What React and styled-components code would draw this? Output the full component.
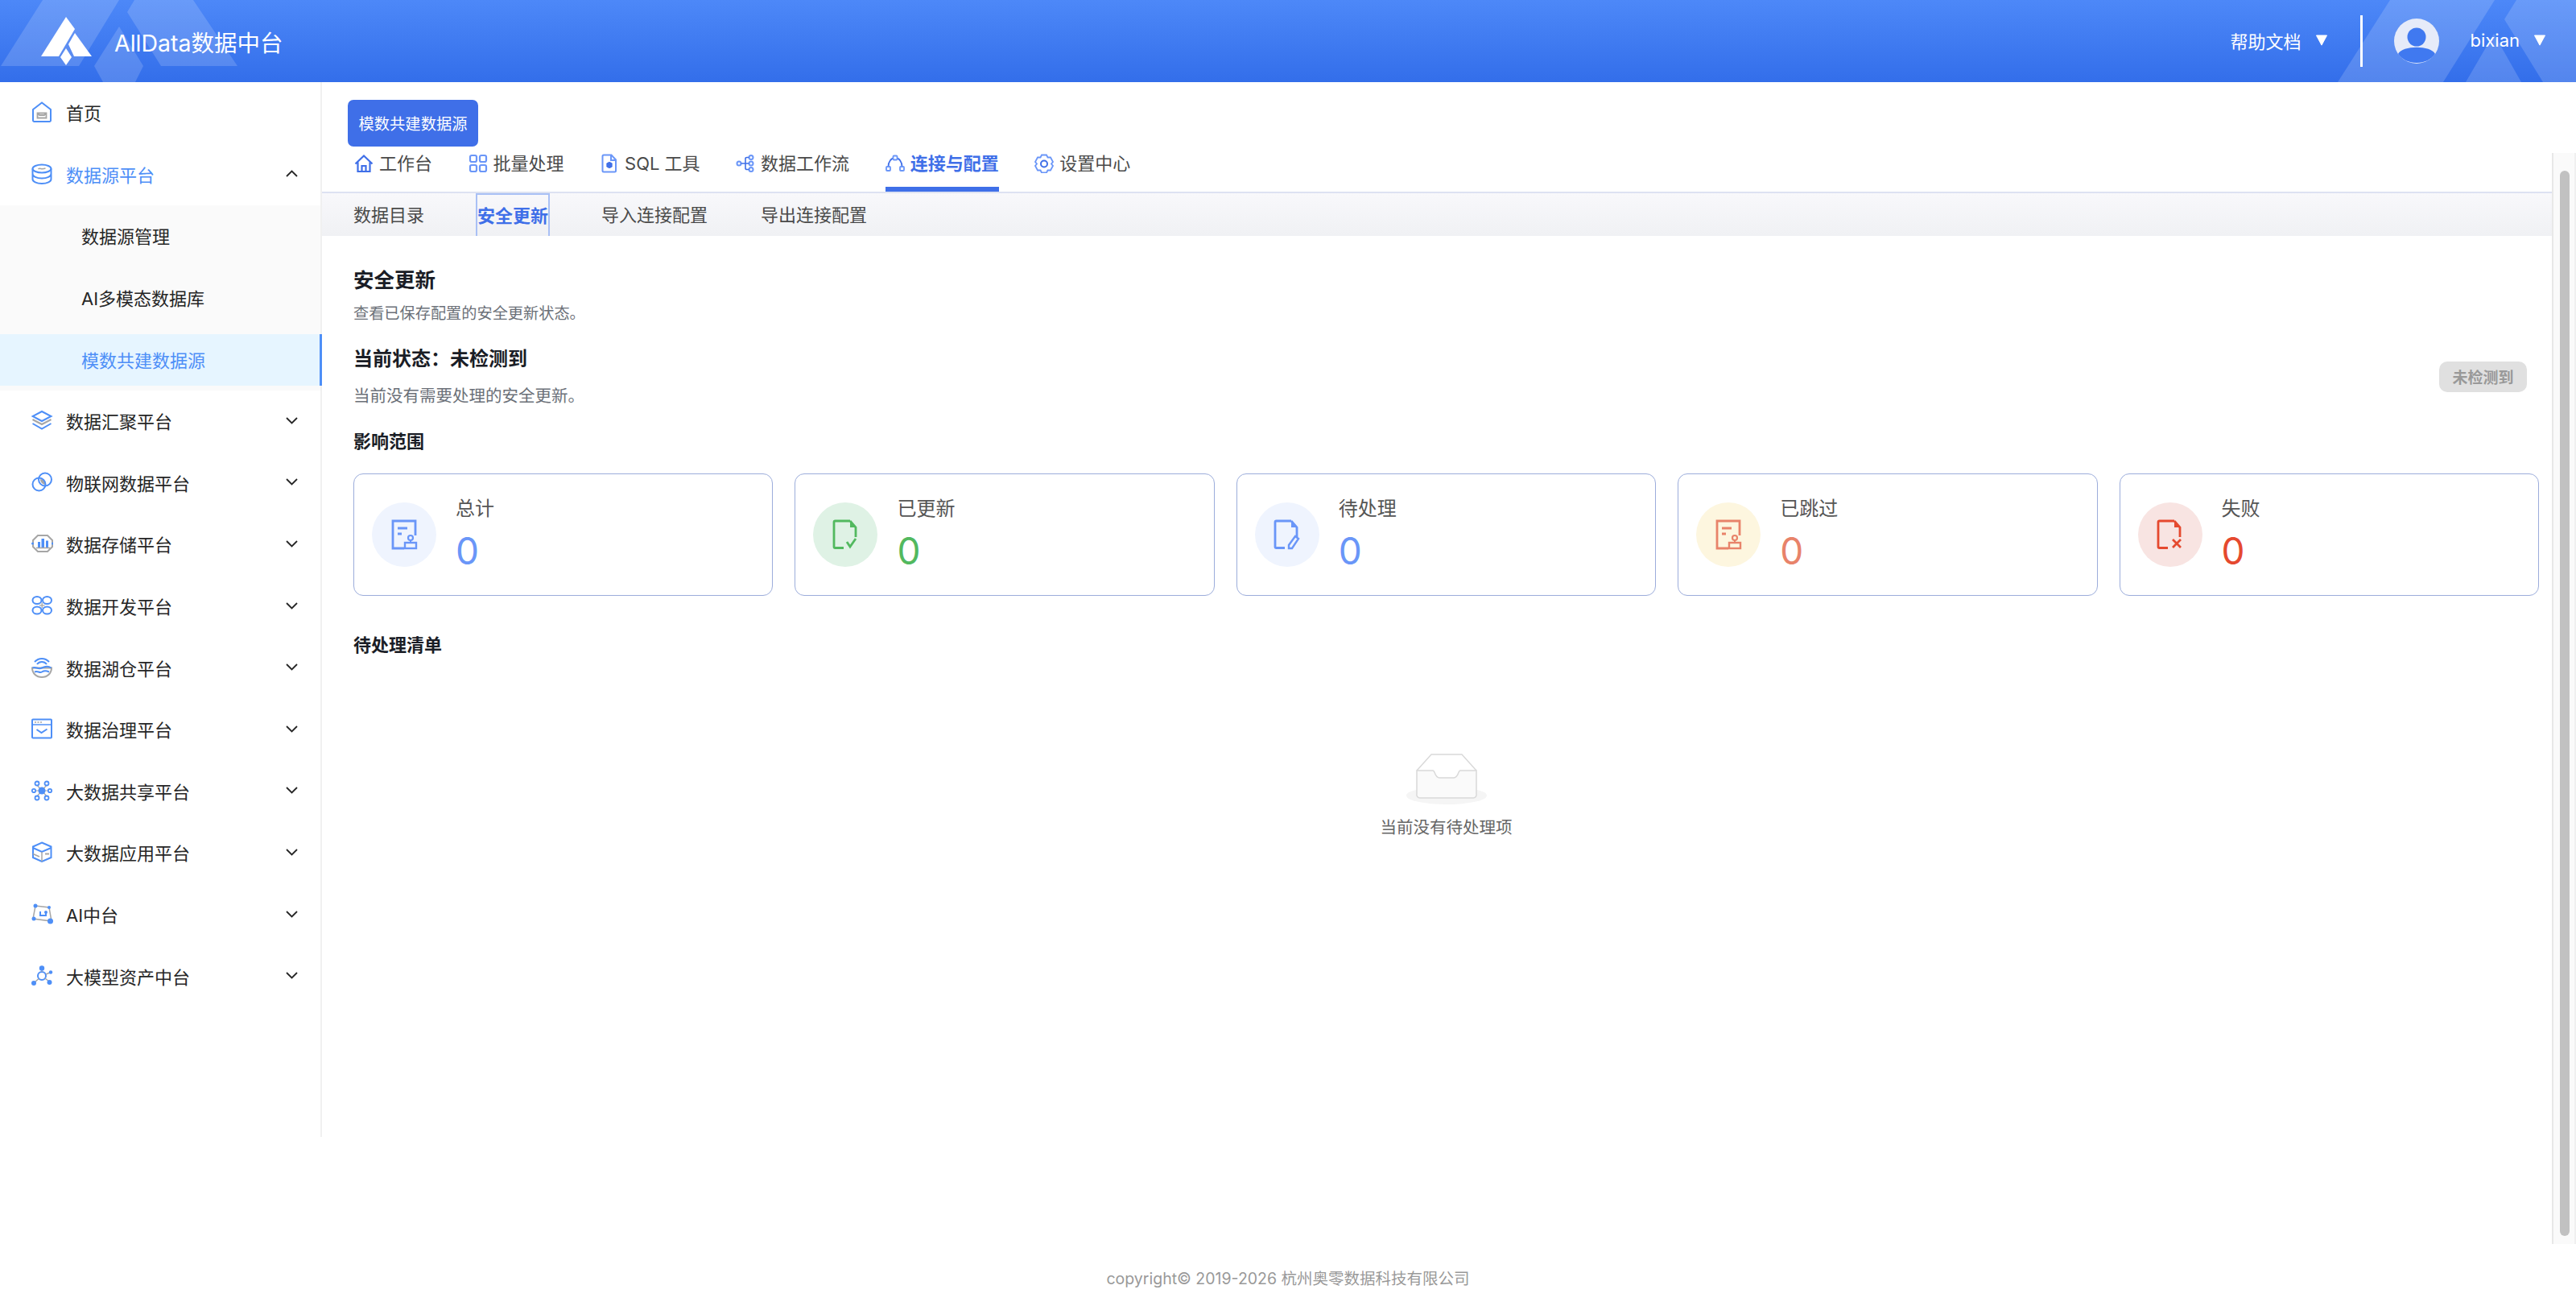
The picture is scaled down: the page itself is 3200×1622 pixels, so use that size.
import React from "react";
import styled, { createGlobalStyle } from "styled-components";

const GlobalStyle = createGlobalStyle`
	html, body {
		margin: 0;
		padding: 0;
		background: #fff;
		overflow: hidden;
	}
	body {
		font-family: Inter, "Noto Sans CJK SC", sans-serif;
		color: #262626;
	}
	* {
		box-sizing: border-box;
	}
`;

const Page = styled.div`
	width: 3200px;
	height: 1622px;
	display: flex;
	flex-direction: column;
`;

const Header = styled.header`
	position: relative;
	height: 102px;
	flex: none;
	display: flex;
	align-items: center;
	padding: 0 37px 0 50px;
	background: linear-gradient(180deg, #4d88f8 0%, #336eea 100%);
	color: #fff;
	overflow: hidden;
`;

const HeaderArt = styled.svg`
	position: absolute;
	top: 0;
	left: 0;
	pointer-events: none;
`;

const Brand = styled.div`
	position: relative;
	display: flex;
	align-items: center;
	gap: 26px;
	font-size: 28.5px;
`;

const HeaderRight = styled.div`
	position: relative;
	margin-left: auto;
	display: flex;
	align-items: center;
	font-size: 22px;
`;

const HeaderLabel = styled.span`
	padding-bottom: 3px;
`;

const HeaderDivider = styled.span`
	width: 3px;
	height: 64px;
	background: #fff;
	margin: 0 39px 0 40px;
`;

const Avatar = styled.svg`
	margin-right: 39px;
`;

const Caret = styled.svg`
	margin-left: 17px;
	padding-bottom: 1px;
`;

const Body = styled.div`
	flex: 1;
	display: flex;
	min-height: 0;
`;

const Sidebar = styled.nav`
	width: 400px;
	height: 1310px;
	flex: none;
	border-right: 2px solid #f0f0f0;
	background: #fff;
`;

const MenuRow = styled.div`
	height: 76.6px;
	display: flex;
	align-items: center;
	padding: 0 28px 2px 39px;
	font-size: 22px;
	color: ${(p) => (p.$open ? "#4e8ff7" : "#262626")};
`;

const MenuIcon = styled.svg`
	flex: none;
	margin-right: 16px;
`;

const Chevron = styled.svg`
	margin-left: auto;
`;

const SubMenu = styled.div`
	display: flex;
	flex-direction: column;
	gap: 12.6px;
	padding: 6.3px 0;
	background: #fafafa;
`;

const SubRow = styled.div`
	height: 64px;
	display: flex;
	align-items: center;
	padding: 0 0 2px 101px;
	font-size: 22px;
	color: ${(p) => (p.$active ? "#4e8ff7" : "#262626")};
	background: ${(p) => (p.$active ? "#e6f5ff" : "transparent")};
	border-right: ${(p) => (p.$active ? "3px solid #4e8ff7" : "none")};
	margin-right: ${(p) => (p.$active ? "-2px" : "0")};
`;

const Main = styled.main`
	flex: 1;
	min-width: 0;
	display: flex;
	flex-direction: column;
`;

const TitleButton = styled.div`
	width: 162px;
	height: 58px;
	margin: 22px 0 8px 32px;
	flex: none;
	display: flex;
	align-items: center;
	justify-content: center;
	border-radius: 7px;
	background: #3f6fe8;
	color: #fff;
	font-size: 19.3px;
`;

const ScrollArea = styled.div`
	flex: 1;
	display: flex;
	min-height: 0;
`;

const ScrollContent = styled.div`
	flex: 1;
	min-width: 0;
`;

const ScrollTrack = styled.div`
	width: 30px;
	flex: none;
	padding: 22px 6px 10px 8px;
	background: #fafafa;
	border-left: 2px solid #e8e8e8;
	border-right: 2px solid #f0f0f0;
`;

const ScrollThumb = styled.div`
	height: 100%;
	border-radius: 8px;
	background: #c1c1c1;
`;

const Tabs = styled.div`
	height: 48px;
	display: flex;
	gap: 44.5px;
	padding-left: 40px;
`;

const Tab = styled.div`
	display: flex;
	align-items: center;
	gap: 7px;
	height: 48px;
	padding-bottom: 20px;
	font-size: 22px;
	font-weight: ${(p) => (p.$active ? 600 : 400)};
	color: ${(p) => (p.$active ? "#3f6fe8" : "#4a4a4a")};
	border-bottom: 6px solid ${(p) => (p.$active ? "#3f6fe8" : "transparent")};
`;

const TabIcon = styled.svg`
	margin-top: 4px;
`;

const SubTabs = styled.div`
	height: 55px;
	display: flex;
	gap: 66px;
	padding-left: 39px;
	border-top: 2px solid #dde2f2;
	background: linear-gradient(180deg, #f8f8fb 0%, #f0f1f4 100%);
`;

const SubTab = styled.div`
	display: flex;
	align-items: center;
	padding-bottom: 3px;
	font-size: 22px;
	color: ${(p) => (p.$active ? "#3f6fe8" : "#4a4a4a")};
	font-weight: ${(p) => (p.$active ? 600 : 400)};
	border: ${(p) => (p.$active ? "2px solid #a9c0f5" : "none")};
	border-bottom: none;
	margin: ${(p) => (p.$active ? "0 -2px" : "0")};
`;

const Panel = styled.section`
	padding: 37px 16px 0 39px;
`;

const PageTitle = styled.h2`
	margin: 0;
	font-size: 25.5px;
	line-height: 36px;
	font-weight: 600;
	color: #1a1d26;
`;

const Muted = styled.p`
	margin: ${(p) => p.$top}px 0 0;
	font-size: ${(p) => p.$size}px;
	line-height: 28px;
	color: #6b7078;
`;

const StatusRow = styled.div`
	margin-top: 26px;
	display: flex;
	align-items: center;
	justify-content: space-between;
	padding-right: 15px;
`;

const StatusTitle = styled.div`
	font-size: 24px;
	line-height: 34px;
	font-weight: 600;
	color: #1a1d26;
`;

const Badge = styled.span`
	width: 109px;
	height: 38px;
	display: flex;
	align-items: center;
	justify-content: center;
	border-radius: 10px;
	background: #e0e0e0;
	color: #999;
	font-size: 19px;
	font-weight: 600;
`;

const SectionTitle = styled.h3`
	margin: ${(p) => p.$top}px 0 0;
	font-size: 22px;
	line-height: 30px;
	font-weight: 600;
	color: #1a1d26;
`;

const Cards = styled.div`
	margin-top: 25px;
	display: grid;
	grid-template-columns: repeat(5, 1fr);
	gap: 27px;
`;

const Card = styled.div`
	height: 152px;
	display: flex;
	align-items: center;
	gap: 24px;
	padding-left: 22px;
	border: 1px solid #9caddb;
	border-radius: 12px;
	background: #fff;
`;

const CardCircle = styled.div`
	width: 80px;
	height: 80px;
	flex: none;
	display: flex;
	align-items: center;
	justify-content: center;
	border-radius: 50%;
	background: ${(p) => p.$bg};
`;

const CardText = styled.div`
	display: flex;
	flex-direction: column;
	gap: 5px;
`;

const CardLabel = styled.div`
	font-size: 24px;
	line-height: 34px;
	color: #555;
`;

const CardValue = styled.div`
	font-size: 46px;
	line-height: 60px;
	color: ${(p) => p.$color};
`;

const Empty = styled.div`
	margin-top: 120px;
	display: flex;
	flex-direction: column;
	align-items: center;
`;

const EmptyText = styled.div`
	margin-top: 13px;
	font-size: 20.5px;
	line-height: 30px;
	color: #666;
`;

const Footer = styled.footer`
	height: 77px;
	flex: none;
	padding-top: 29px;
	text-align: center;
	font-size: 19.5px;
	line-height: 28px;
	color: #999;
`;

const BLUE = "#4e8ff7";
const GREY = "#a6a6a6";

const SIDE_ICONS = {
	home: (
		<>
			<path d="M2 10L13 1.500 24 10V23.500a1.500 1.500 0 0 1-1.500 1.500H3.500A1.500 1.500 0 0 1 2 23.500Z" fill="none" stroke={BLUE} strokeWidth="2" />
			<path d="M7.500 14.500H18.500V20.500H7.500ZM7.500 14.500L10 17H16L18.500 14.500" fill="none" stroke={GREY} strokeWidth="1.800" />
		</>
	),
	db: (
		<>
			<ellipse cx="13" cy="6.500" rx="11.500" ry="5" fill="none" stroke={BLUE} strokeWidth="2" />
			<path d="M1.500 6.500V19.500C1.500 22.500 6.500 25 13 25S24.500 22.500 24.500 19.500V6.500M1.500 13C1.500 16 6.500 18.500 13 18.500S24.500 16 24.500 13" fill="none" stroke={BLUE} strokeWidth="2" />
			<path d="M8.500 7C10.500 5 12 8 17.500 6" fill="none" stroke={GREY} strokeWidth="1.500" />
		</>
	),
	layers: (
		<>
			<path d="M13 2L24.500 8 13 14 1.500 8Z" fill="none" stroke={BLUE} strokeWidth="2" />
			<path d="M1.500 12L13 18 24.500 12" fill="none" stroke={GREY} strokeWidth="2" />
			<path d="M1.500 17L13 23.500 24.500 17" fill="none" stroke={BLUE} strokeWidth="2" />
		</>
	),
	circles: (
		<>
			<path d="M11 9C15 9 18 12 18 16 14 16 11 13 11 9Z" fill={GREY} />
			<circle cx="9.500" cy="15.500" r="8" fill="none" stroke={BLUE} strokeWidth="2" />
			<circle cx="17" cy="9.500" r="8" fill="none" stroke={BLUE} strokeWidth="2" />
		</>
	),
	storage: (
		<>
			<path d="M8 3H20L26 9V17L20 23H8L2 17V9Z" fill="none" stroke={GREY} strokeWidth="2" />
			<path d="M8 11h3v7H8ZM12.500 7h3.500v11h-3.500ZM18 9.500h3V18h-3Z" fill={BLUE} />
			<path d="M6 18.500H23" stroke={GREY} strokeWidth="1.500" />
			<circle cx="1.500" cy="13" r="1.500" fill={BLUE} />
			<circle cx="26.500" cy="13" r="1.500" fill={BLUE} />
		</>
	),
	dev: (
		<>
			<ellipse cx="7" cy="6.500" rx="5.500" ry="4.500" fill="none" stroke={BLUE} strokeWidth="2" />
			<ellipse cx="19.500" cy="6.500" rx="5.500" ry="4.500" fill="none" stroke={BLUE} strokeWidth="2" />
			<ellipse cx="7" cy="19" rx="5.500" ry="4.500" fill="none" stroke={BLUE} strokeWidth="2" />
			<ellipse cx="19.500" cy="19" rx="5.500" ry="4.500" fill="none" stroke={BLUE} strokeWidth="2" />
			<path d="M13.200 9.500V16M10 12.800H16.500" stroke={GREY} strokeWidth="1.300" />
		</>
	),
	lake: (
		<>
			<path d="M7 9C10 5 16 5 19 9M4 6C9 0.500 17 0.500 22 6" fill="none" stroke={BLUE} strokeWidth="2" />
			<path d="M1 13.500H25C25 20 20 25 13 25S1 20 1 13.500Z" fill="none" stroke={GREY} strokeWidth="2" />
			<path d="M1.500 13.500C5 11 8 16 13 13.500S21 11 24.500 13.500M4 18.500C8 16.500 10 20.500 13 18.500S18 16.500 22 18.500" fill="none" stroke={BLUE} strokeWidth="2" />
		</>
	),
	govern: (
		<>
			<rect x="1" y="1.500" width="24" height="23" rx="1" fill="none" stroke={BLUE} strokeWidth="2" />
			<path d="M1 8H25" stroke={BLUE} strokeWidth="1.500" />
			<path d="M4 5H6M7.500 5H9.500M11 5H13" stroke={GREY} strokeWidth="1.500" />
			<path d="M6.500 14L12.500 18 19.500 13.500" fill="none" stroke={BLUE} strokeWidth="2" />
		</>
	),
	share: (
		<>
			<path d="M7 6L19 20M19 6L7 20M3 13H23" stroke={GREY} strokeWidth="1.200" />
			<circle cx="13" cy="13" r="4.500" fill={BLUE} />
			<circle cx="7" cy="4" r="2.500" fill="#fff" stroke={BLUE} strokeWidth="1.800" />
			<circle cx="19" cy="4" r="2.500" fill="#fff" stroke={BLUE} strokeWidth="1.800" />
			<circle cx="7" cy="22" r="2.500" fill="#fff" stroke={BLUE} strokeWidth="1.800" />
			<circle cx="19" cy="22" r="2.500" fill="#fff" stroke={BLUE} strokeWidth="1.800" />
			<circle cx="3" cy="13" r="2.200" fill="#fff" stroke={BLUE} strokeWidth="1.800" />
			<circle cx="23" cy="13" r="2.200" fill="#fff" stroke={BLUE} strokeWidth="1.800" />
		</>
	),
	cube: (
		<>
			<path d="M13 1.500L24.500 6.500V20L13 25 2 20V6.500Z" fill="none" stroke={BLUE} strokeWidth="2" />
			<path d="M2 8L13 13 24.500 8" fill="none" stroke={BLUE} strokeWidth="2" />
			<path d="M13 13V25M2 15.500L10 19" stroke={GREY} strokeWidth="1.500" />
			<path d="M17 15.500H22" stroke={GREY} strokeWidth="2" />
		</>
	),
	ai: (
		<>
			<path d="M5 3L22 5 25 22 2 19Z" fill="none" stroke={GREY} strokeWidth="1.500" />
			<path d="M11 10V15H18V11" fill="none" stroke={BLUE} strokeWidth="2" />
			<circle cx="5" cy="3" r="2.500" fill={BLUE} />
			<circle cx="22" cy="5" r="2" fill={BLUE} />
			<circle cx="23.500" cy="22" r="3.500" fill={BLUE} />
			<circle cx="3" cy="19" r="2.500" fill={BLUE} />
			<circle cx="18" cy="11" r="2" fill={BLUE} />
		</>
	),
	model: (
		<>
			<circle cx="13" cy="13" r="5" fill="none" stroke={BLUE} strokeWidth="2" />
			<path d="M13 8V3M9 16.500L3 22M17 16L22 20M18 11L23 9" stroke={GREY} strokeWidth="1.500" />
			<circle cx="13" cy="3.500" r="3.200" fill={BLUE} />
			<circle cx="3" cy="22" r="3" fill={BLUE} />
			<circle cx="22.500" cy="21" r="3" fill={BLUE} />
			<circle cx="24" cy="8.500" r="2.200" fill={BLUE} />
		</>
	),
};

const TAB_ICONS = {
	home: (
		<>
			<path d="M1.500 12.500L12 2.500 22.500 12.500M4.500 10.500V22H19.500V10.500" fill="none" stroke="#3f6fe8" strokeWidth="2.200" />
			<path d="M9.500 22V15H14.500V22" fill="none" stroke="#3f6fe8" strokeWidth="2.200" />
		</>
	),
	grid: (
		<>
			<rect x="2" y="2" width="8" height="8" rx="2" fill="none" stroke="#6a96f8" strokeWidth="2.200" />
			<rect x="14" y="2" width="8" height="8" rx="2" fill="none" stroke="#6a96f8" strokeWidth="2.200" />
			<rect x="2" y="14" width="8" height="8" rx="2" fill="none" stroke="#6a96f8" strokeWidth="2.200" />
			<rect x="14" y="14" width="8" height="8" rx="2" fill="none" stroke="#6a96f8" strokeWidth="2.200" />
		</>
	),
	file: (
		<>
			<path d="M5 1.500H14.500L20 7.500V21a1.500 1.500 0 0 1-1.500 1.500H5A1.500 1.500 0 0 1 3.500 21V3A1.500 1.500 0 0 1 5 1.500ZM14 2V8H20" fill="none" stroke="#6a96f8" strokeWidth="2" />
			<circle cx="12" cy="14" r="2.500" fill="none" stroke="#3f6fe8" strokeWidth="2.400" />
			<path d="M12 10V18M8.500 12L15.500 16M15.500 12L8.500 16" stroke="#3f6fe8" strokeWidth="1.400" />
		</>
	),
	flow: (
		<>
			<circle cx="4" cy="12" r="2.500" fill="none" stroke="#6a96f8" strokeWidth="2" />
			<circle cx="19" cy="4.500" r="2.500" fill="none" stroke="#6a96f8" strokeWidth="2" />
			<circle cx="19" cy="12" r="2.500" fill="none" stroke="#6a96f8" strokeWidth="2" />
			<circle cx="19" cy="19.500" r="2.500" fill="none" stroke="#6a96f8" strokeWidth="2" />
			<path d="M6.500 12H16.500M12 12V6C12 5 13 4.500 14 4.500H16.500M12 12V18C12 19 13 19.500 14 19.500H16.500" fill="none" stroke="#3f6fe8" strokeWidth="1.600" />
		</>
	),
	link: (
		<>
			<path d="M3.500 16C3.500 10 7 5 12 5S20.500 10 20.500 16" fill="none" stroke="#3f6fe8" strokeWidth="1.800" />
			<rect x="1" y="16" width="5" height="5" rx="1" fill="none" stroke="#6a96f8" strokeWidth="1.800" />
			<rect x="18" y="16" width="5" height="5" rx="1" fill="none" stroke="#6a96f8" strokeWidth="1.800" />
			<rect x="9.500" y="2.500" width="5" height="5" rx="1" fill="#fff" stroke="#6a96f8" strokeWidth="1.800" />
		</>
	),
	gear: (
		<>
			<path d="M9 1.500H15L16.500 4.500 20 4.500 23 10 21 12.500 23 15 20 20.500 16.500 20.500 15 23.500H9L7.500 20.500 4 20.500 1 15 3 12.500 1 10 4 4.500 7.500 4.500Z" fill="none" stroke="#6a96f8" strokeWidth="1.800" />
			<circle cx="12" cy="12.500" r="4" fill="none" stroke="#3f6fe8" strokeWidth="2" />
		</>
	),
};

const MENU = [
	{ icon: "home", label: "首页", noArrow: true },
	{
		icon: "db",
		label: "数据源平台",
		open: true,
		children: ["数据源管理", "AI多模态数据库", "模数共建数据源"],
	},
	{ icon: "layers", label: "数据汇聚平台" },
	{ icon: "circles", label: "物联网数据平台" },
	{ icon: "storage", label: "数据存储平台" },
	{ icon: "dev", label: "数据开发平台" },
	{ icon: "lake", label: "数据湖仓平台" },
	{ icon: "govern", label: "数据治理平台" },
	{ icon: "share", label: "大数据共享平台" },
	{ icon: "cube", label: "大数据应用平台" },
	{ icon: "ai", label: "AI中台" },
	{ icon: "model", label: "大模型资产中台" },
];

const TABS = [
	{ icon: "home", label: "工作台" },
	{ icon: "grid", label: "批量处理" },
	{ icon: "file", label: "SQL 工具" },
	{ icon: "flow", label: "数据工作流" },
	{ icon: "link", label: "连接与配置", active: true },
	{ icon: "gear", label: "设置中心" },
];

const SUB_TABS = ["数据目录", "安全更新", "导入连接配置", "导出连接配置"];

const DocShape = ({ color }) => (
	<>
		<path
			d="M22 2H3.500A1.500 1.500 0 0 0 2 3.500V34A1.500 1.500 0 0 0 3.500 35.500H14M22 2L29 10V22"
			fill="none"
			stroke={color}
			strokeWidth="2.800"
		/>
		<path d="M22 3L28 10H22Z" fill={color} />
	</>
);

const ReportShape = ({ color }) => (
	<>
		<path d="M16 36H2V2H30V20" fill="none" stroke={color} strokeWidth="2.800" />
		<path d="M8 11H20M8 18H13" stroke={color} strokeWidth="2.800" />
		<circle cx="24" cy="23" r="3" fill="none" stroke={color} strokeWidth="2.200" />
		<path d="M24 26V29" stroke={color} strokeWidth="2" />
		<rect x="17" y="29" width="14" height="7" fill="none" stroke={color} strokeWidth="2.400" />
	</>
);

const CARDS = [
	{
		label: "总计",
		color: "#6a96f8",
		bg: "#eff4fe",
		icon: <ReportShape color="#6a96f8" />,
	},
	{
		label: "已更新",
		color: "#52b95f",
		bg: "#dff2e5",
		icon: (
			<>
				<DocShape color="#52b95f" />
				<path d="M18 28L22 34 29 24" fill="none" stroke="#52b95f" strokeWidth="2.800" />
			</>
		),
	},
	{
		label: "待处理",
		color: "#6a96f8",
		bg: "#eff4fe",
		icon: (
			<>
				<DocShape color="#6a96f8" />
				<path d="M27 21L31 24 23 36H19V32Z" fill="none" stroke="#6a96f8" strokeWidth="2.400" />
			</>
		),
	},
	{
		label: "已跳过",
		color: "#e8836a",
		bg: "#fdf6df",
		icon: <ReportShape color="#e8836a" />,
	},
	{
		label: "失败",
		color: "#e5492f",
		bg: "#f8e4e2",
		icon: (
			<>
				<DocShape color="#e5492f" />
				<path d="M20 25L30 35M30 25L20 35" stroke="#e5492f" strokeWidth="2.800" />
			</>
		),
	},
];

const MenuGlyph = ({ name }) => (
	<MenuIcon width="27" height="26" viewBox="0 0 27 26">
		{SIDE_ICONS[name]}
	</MenuIcon>
);

const Arrow = ({ up }) => (
	<Chevron width="15" height="9" viewBox="0 0 15 9">
		<path
			d={up ? "M1 8L7.500 1.500 14 8" : "M1 1L7.500 7.500 14 1"}
			fill="none"
			stroke="#262626"
			strokeWidth="1.800"
		/>
	</Chevron>
);

const DownCaret = () => (
	<Caret width="16" height="16" viewBox="0 0 16 16">
		<path d="M1 1H15L8 14Z" fill="#fff" stroke="#fff" strokeLinejoin="round" />
	</Caret>
);

const App = () => {
	return (
		<Page>
			<GlobalStyle />
			<Header>
				<HeaderArt width="3200" height="102" viewBox="0 0 3200 102">
					<g fill="#fff" fillOpacity="0.16">
						<path d="M1 82L53 0H148L98 82Z" />
						<path d="M158 15L167 0H240L295 82H200Z" />
						<path d="M148 33L178 82 168 102H128L117 82Z" />
						<path d="M2904 102L2969 0H3099L3035 102Z" />
						<path d="M3126 0H3200V102H3159L3111 24Z" />
						<path d="M3063 102L3098 42 3132 102Z" />
					</g>
				</HeaderArt>
				<Brand>
					<svg width="66" height="62" viewBox="50 13 66 62">
						<path d="M82 14L93 29 73 63H51Z" fill="#fff" />
						<path d="M93 34L114 63H92L85 48Z" fill="#fff" />
						<path d="M82 53L89 64 82 74 75 64Z" fill="#fff" />
					</svg>
					<span>AllData数据中台</span>
				</Brand>
				<HeaderRight>
					<HeaderLabel>帮助文档</HeaderLabel>
					<DownCaret />
					<HeaderDivider />
					<Avatar width="56" height="56" viewBox="0 0 56 56">
						<circle cx="28" cy="28" r="28" fill="#e6ebf9" />
						<circle cx="28" cy="23" r="11.500" fill="#4079f0" />
						<path d="M5 44C10 33 46 33 51 44 46 51 38 55 28 55S10 51 5 44Z" fill="#4079f0" />
					</Avatar>
					<HeaderLabel>bixian</HeaderLabel>
					<DownCaret />
				</HeaderRight>
			</Header>
			<Body>
				<Sidebar>
					{MENU.map((item) => (
						<React.Fragment key={item.label}>
							<MenuRow $open={item.open}>
								<MenuGlyph name={item.icon} />
								{item.label}
								{!item.noArrow && <Arrow up={item.open} />}
							</MenuRow>
							{item.children && (
								<SubMenu>
									{item.children.map((child, index) => (
										<SubRow key={child} $active={index === 2}>
											{child}
										</SubRow>
									))}
								</SubMenu>
							)}
						</React.Fragment>
					))}
				</Sidebar>
				<Main>
					<TitleButton>模数共建数据源</TitleButton>
					<ScrollArea>
						<ScrollContent>
							<Tabs>
								{TABS.map((tab) => (
									<Tab key={tab.label} $active={tab.active}>
										<TabIcon width="24" height="24" viewBox="0 0 24 24">
											{TAB_ICONS[tab.icon]}
										</TabIcon>
										{tab.label}
									</Tab>
								))}
							</Tabs>
							<SubTabs>
								{SUB_TABS.map((label, index) => (
									<SubTab key={label} $active={index === 1}>
										{label}
									</SubTab>
								))}
							</SubTabs>
							<Panel>
								<PageTitle>安全更新</PageTitle>
								<Muted $top={9} $size={19.2}>查看已保存配置的安全更新状态。</Muted>
								<StatusRow>
									<div>
										<StatusTitle>当前状态：未检测到</StatusTitle>
										<Muted $top={15} $size={20.5}>当前没有需要处理的安全更新。</Muted>
									</div>
									<Badge>未检测到</Badge>
								</StatusRow>
								<SectionTitle $top={27}>影响范围</SectionTitle>
								<Cards>
									{CARDS.map((card) => (
										<Card key={card.label}>
											<CardCircle $bg={card.bg}>
												<svg width="33" height="38" viewBox="0 0 33 38">
													{card.icon}
												</svg>
											</CardCircle>
											<CardText>
												<CardLabel>{card.label}</CardLabel>
												<CardValue $color={card.color}>0</CardValue>
											</CardText>
										</Card>
									))}
								</Cards>
								<SectionTitle $top={46}>待处理清单</SectionTitle>
								<Empty>
									<svg width="100" height="64" viewBox="0 0 100 64">
										<ellipse cx="50" cy="52" rx="50" ry="11" fill="#f5f5f5" />
										<path d="M13 21L31 1H69L87 21" fill="#fff" stroke="#d9d9d9" strokeWidth="1.500" />
										<path d="M13 21H33C36 21 35 30 41 30H59C65 30 64 21 67 21H87V50A4 4 0 0 1 83 55H17A4 4 0 0 1 13 50Z" fill="#fafafa" stroke="#d9d9d9" strokeWidth="1.500" />
									</svg>
									<EmptyText>当前没有待处理项</EmptyText>
								</Empty>
							</Panel>
						</ScrollContent>
						<ScrollTrack>
							<ScrollThumb />
						</ScrollTrack>
					</ScrollArea>
				</Main>
			</Body>
			<Footer>copyright© 2019-2026 杭州奥零数据科技有限公司</Footer>
		</Page>
	);
};

export default App;
